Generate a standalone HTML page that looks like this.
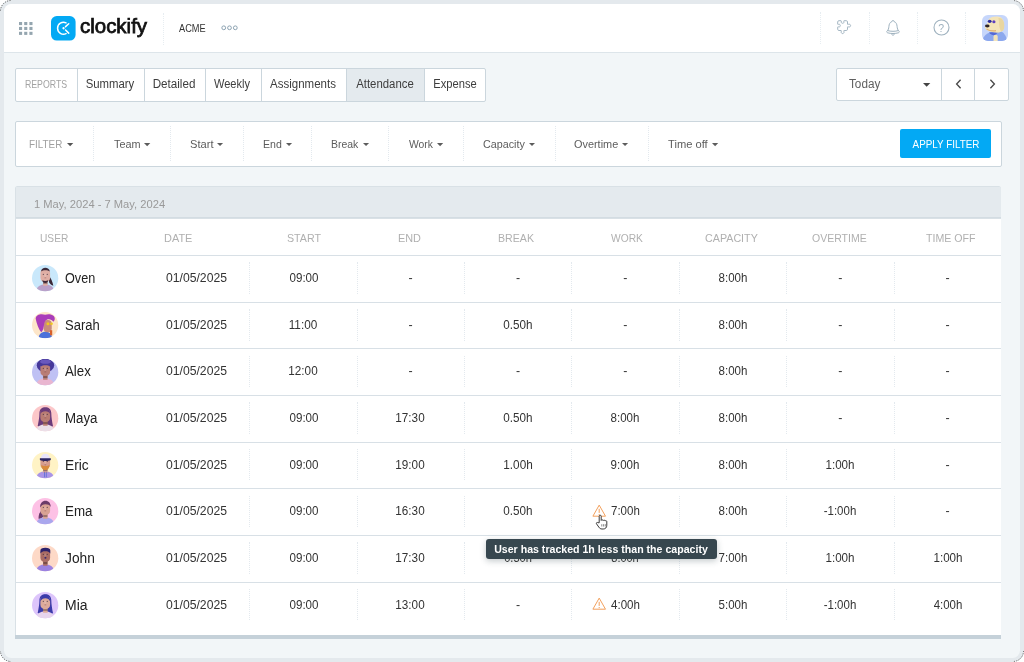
<!DOCTYPE html>
<html lang="en">
<head>
<meta charset="utf-8">
<title>Clockify - Attendance report</title>
<style>
html,body{margin:0;padding:0;}
body{width:1024px;height:662px;overflow:hidden;background:#fff;position:relative;font-family:"Liberation Sans",sans-serif;}
.frame{position:absolute;left:0;top:0;width:1024px;height:662px;border-radius:11px;background:#e4e9ed;}
.win{position:absolute;left:4px;top:4px;width:1016px;height:653.500px;border-radius:7.500px;background:#f2f6f8;overflow:hidden;will-change:transform;}
.t{position:absolute;white-space:nowrap;line-height:20px;height:20px;display:block;}
.abs{position:absolute;display:block;overflow:visible;}
.vd{position:absolute;width:0;border-left:1px dotted #e3e9ee;display:block;}
.vl{position:absolute;top:0;bottom:0;width:0;border-left:1px solid #cbd6dd;display:block;}
.hl{position:absolute;left:0;right:0;top:0;height:1px;background:#d8e0e6;display:block;}
.tab{position:absolute;top:0;bottom:0;box-sizing:border-box;}
.logo{-webkit-text-stroke:0.750px #111;}
</style>
</head>
<body>
<svg width="0" height="0" style="position:absolute"><defs><clipPath id="avc"><circle cx="13" cy="13" r="13"/></clipPath></defs></svg>
<div class="frame"></div>
<svg class="abs" style="left:0;top:0" width="1024" height="662" viewBox="0 0 1024 662"><rect x=".5" y=".5" width="1023" height="661" rx="10.500" fill="none" stroke="#555" stroke-width="1" stroke-dasharray="1 1.400" clip-path="url(#crn)"/>
<defs><clipPath id="crn"><path d="M0 0h11v11H0zM1013 0h11v11h-11zM0 651h11v11H0zM1013 651h11v11h-11z"/></clipPath></defs></svg>
<div class="win">
<div class="hdr" style="position:absolute;left:0.00px;top:0.00px;width:1016.00px;height:47.60px;background:#fff;border-bottom:1.400px solid #dde5ea;"><div style="position:absolute;left:-4px;top:-4px;"><svg class="abs" style="left:19px;top:21.8px" width="14" height="13.500" viewBox="0 0 14 13.500"><rect x="0.00" y="0.00" width="3.100" height="3.100" fill="#94a5af"/><rect x="5.20" y="0.00" width="3.100" height="3.100" fill="#94a5af"/><rect x="10.40" y="0.00" width="3.100" height="3.100" fill="#94a5af"/><rect x="0.00" y="4.90" width="3.100" height="3.100" fill="#94a5af"/><rect x="5.20" y="4.90" width="3.100" height="3.100" fill="#94a5af"/><rect x="10.40" y="4.90" width="3.100" height="3.100" fill="#94a5af"/><rect x="0.00" y="9.80" width="3.100" height="3.100" fill="#94a5af"/><rect x="5.20" y="9.80" width="3.100" height="3.100" fill="#94a5af"/><rect x="10.40" y="9.80" width="3.100" height="3.100" fill="#94a5af"/></svg><svg class="abs" style="left:51.2px;top:15.700px" width="24.600" height="24.600" viewBox="0 0 24.700 24.700"><rect width="24.700" height="24.700" rx="5.800" fill="#03a9f4"/><path d="M15.140 6.860A6 6 0 1 0 15.140 17.740" fill="none" stroke="#fff" stroke-width="1.500" stroke-linecap="round"/><path d="M14.600 10.700L17.800 7.800M14.600 14.100L17.800 17.200" stroke="#fff" stroke-width="1.500" stroke-linecap="round"/><circle cx="12.600" cy="12.300" r="1.150" fill="#fff"/></svg><span id="t1" class="t logo" style="top:16.00px;left:79.90px;font-size:20.0px;color:#111;transform:scaleX(1.0226);transform-origin:0 50%;">clockify</span><i class="vd" style="left:162.50px;top:12.70px;height:32.00px;border-left-color:#e7edf1"></i><span id="t2" class="t " style="top:19.00px;left:179.20px;font-size:10.3px;color:#333;transform:scaleX(0.8955);transform-origin:0 50%;">ACME</span><svg class="abs" style="left:220px;top:24px" width="20" height="8" viewBox="0 0 20 8"><g fill="none" stroke="#8da3b2" stroke-width="1"><circle cx="3.750" cy="3.800" r="1.900"/><circle cx="9.500" cy="3.800" r="1.900"/><circle cx="15.300" cy="3.800" r="1.900"/></g></svg><i class="vd" style="left:820.10px;top:12.20px;height:32.20px;border-left-color:#e7edf1"></i><i class="vd" style="left:868.50px;top:12.20px;height:32.20px;border-left-color:#e7edf1"></i><i class="vd" style="left:916.50px;top:12.20px;height:32.20px;border-left-color:#e7edf1"></i><i class="vd" style="left:965.30px;top:12.20px;height:32.20px;border-left-color:#e7edf1"></i><svg class="abs" style="left:836.7px;top:20.300px" width="15" height="15" viewBox="0 0 15 15"><path d="M1.900.7H4C4.600.7 4.500 1.300 4.300 1.700 4 2.600 4.700 3.300 5.600 3.300S7.200 2.600 6.900 1.700C6.700 1.300 6.600.7 7.200.7H9.300C10 .7 10.500 1.200 10.500 1.900V4C10.500 4.600 11 4.500 11.400 4.300 12.500 3.900 13.600 4.500 13.600 5.600S12.500 7.300 11.400 6.900C11 6.700 10.500 6.600 10.500 7.200V9.300C10.500 10 10 10.500 9.300 10.500H7.200C6.600 10.500 6.700 11 6.900 11.400 7.300 12.500 6.700 13.600 5.600 13.600S3.900 12.500 4.300 11.400C4.500 11 4.600 10.500 4 10.500H1.900C1.200 10.500.7 10 .7 9.300V7.200C.7 6.600 1.300 6.700 1.700 6.900 2.600 7.200 3.300 6.500 3.300 5.600S2.600 4 1.700 4.300C1.300 4.500.7 4.600.7 4V1.900C.7 1.200 1.200.7 1.900.7z" fill="none" stroke="#a3b5c2" stroke-width="1" stroke-linejoin="round"/></svg><svg class="abs" style="left:885.2px;top:19.300px" width="16" height="18" viewBox="0 0 16 18"><g fill="none" stroke="#9fb2bf" stroke-width="1"><path d="M8 1.500c-.7 0-1.100.5-1.100 1.100C4.800 3.300 4.100 5.200 3.900 7.500c-.2 2-.6 3.400-1.600 4.300-.9.700-.7 1.700.3 2 1.500.5 3.500.7 5.400.7s3.900-.2 5.400-.7c1-.3 1.200-1.300.3-2-1-.9-1.400-2.300-1.600-4.300-.2-2.300-.9-4.200-3-4.900C9.100 2 8.700 1.500 8 1.500z"/><path d="M2.600 11.500c1.500.6 3.400.8 5.400.8s3.900-.2 5.400-.8"/><path d="M6.600 14.700c.1.900.6 1.500 1.400 1.500s1.300-.6 1.400-1.500"/></g></svg><svg class="abs" style="left:932.5px;top:19.400px" width="17" height="17" viewBox="0 0 17 17"><circle cx="8.500" cy="8.500" r="7.500" fill="none" stroke="#9fb2bf" stroke-width="1.100"/></svg><span id="t3" class="t " style="top:18.00px;left:941.18px;font-size:10.5px;color:#9fb2bf;transform:translateX(-50%);transform-origin:50% 50%;">?</span><svg class="abs" style="left:982.1px;top:15.100px" width="26" height="26" viewBox="0 0 26 26"><defs><clipPath id="dgc"><rect width="26" height="26" rx="6"/></clipPath></defs><g clip-path="url(#dgc)"><rect width="26" height="26" fill="#c6d6fb"/><path d="M0 26c.5-3 2.500-5.500 5.500-7.500l5-2.500 9 .5c3 1.500 5 5 5.500 9.500z" fill="#8ca8ee"/><path d="M7 17.500c1.500 2.200 4 3 6.500 2.600l2.500-3.100z" fill="#5469d4"/><path d="M7.200 3.600C10 1.100 16 .9 19 2.500c3 2 3.600 7.500 2.600 11.500-1 3-4.500 4-8.500 3.600-4-.3-8-1.500-9.600-4-1-1.600-.4-3.600 1.600-4.100.5-2.500 1-4.400 2.100-5.900z" fill="#f4e4b8"/><path d="M4.500 14c2.500 1.700 6 2.300 9.500 1.700" stroke="#d9a566" stroke-width="1.300" fill="none" opacity=".8"/><path d="M16.400 3.100c3.600-.6 6.100 2.900 5.900 7.900-.1 3.500-1.300 5.500-3.300 5.300-1.500-2.300-2-6.300-2-9.300z" fill="#e9d6a0"/><ellipse cx="5.300" cy="11" rx="2.300" ry="1.450" fill="#2b2229"/><ellipse cx="7.700" cy="6.300" rx="1.900" ry="1.600" fill="#2c2c9e"/><ellipse cx="11.900" cy="6.800" rx="1.600" ry="1.500" fill="#5d3fc0"/><rect x="11.500" y="19.700" width="4.200" height="8" rx="1.900" fill="#f4e4b8"/></g></svg></div></div>
<div class="tabs" style="position:absolute;left:11.10px;top:63.80px;width:471.00px;height:34.00px;background:#fff;border:1px solid #cbd6dd;border-radius:2px;box-sizing:border-box;overflow:hidden;"><div class="tab" style="left:0.00px;width:60.80px;"><span id="t4" class="t " style="top:6.20px;left:29.95px;font-size:10.3px;color:#a3a3a3;transform:translateX(-50%) scaleX(0.8516);transform-origin:50% 50%;">REPORTS</span></div><div class="tab" style="left:60.80px;width:67.10px;border-left:1px solid #cbd6dd;"><span id="t5" class="t " style="top:5.20px;left:32.25px;font-size:12.0px;color:#3d3d3d;transform:translateX(-50%) scaleX(0.9468);transform-origin:50% 50%;">Summary</span></div><div class="tab" style="left:127.90px;width:60.80px;border-left:1px solid #cbd6dd;"><span id="t6" class="t " style="top:5.20px;left:29.38px;font-size:12.0px;color:#3d3d3d;transform:translateX(-50%) scaleX(0.9705);transform-origin:50% 50%;">Detailed</span></div><div class="tab" style="left:188.70px;width:55.90px;border-left:1px solid #cbd6dd;"><span id="t7" class="t " style="top:5.20px;left:26.62px;font-size:12.0px;color:#3d3d3d;transform:translateX(-50%) scaleX(0.9215);transform-origin:50% 50%;">Weekly</span></div><div class="tab" style="left:244.60px;width:85.70px;border-left:1px solid #cbd6dd;"><span id="t8" class="t " style="top:5.20px;left:41.62px;font-size:12.0px;color:#3d3d3d;transform:translateX(-50%) scaleX(0.9586);transform-origin:50% 50%;">Assignments</span></div><div class="tab" style="left:330.30px;width:77.70px;border-left:1px solid #cbd6dd;background:#e4eaee;"><span id="t9" class="t " style="top:5.20px;left:37.90px;font-size:12.0px;color:#3d3d3d;transform:translateX(-50%) scaleX(0.9487);transform-origin:50% 50%;">Attendance</span></div><div class="tab" style="left:408.00px;width:61.00px;border-left:1px solid #cbd6dd;"><span id="t10" class="t " style="top:5.20px;left:29.63px;font-size:12.0px;color:#3d3d3d;transform:translateX(-50%) scaleX(0.9295);transform-origin:50% 50%;">Expense</span></div></div>
<div class="datepick" style="position:absolute;left:831.80px;top:63.70px;width:173.30px;height:33.40px;background:#fff;border:1px solid #cbd6dd;border-radius:2px;box-sizing:border-box;"><span id="t11" class="t " style="top:5.30px;left:12.50px;font-size:12.0px;color:#606060;transform:scaleX(0.9776);transform-origin:0 50%;">Today</span><svg class="abs" style="left:85.80px;top:14.20px" width="7.30" height="3.80" viewBox="0 0 10 5"><path d="M0 0h10L5 5z" fill="#444"/></svg><i class="vl" style="left:104.30px"></i><i class="vl" style="left:137.10px"></i><svg class="abs" style="left:117.80px;top:9.50px" width="8" height="12" viewBox="0 0 8 12"><path d="M5.600 1.700L1.600 6l4 4.300" fill="none" stroke="#4a4a4a" stroke-width="1.350"/></svg><svg class="abs" style="left:151.00px;top:9.50px" width="8" height="12" viewBox="0 0 8 12"><path d="M2.400 1.700L6.400 6l-4 4.300" fill="none" stroke="#4a4a4a" stroke-width="1.350"/></svg></div>
<div class="filters" style="position:absolute;left:10.90px;top:116.80px;width:986.80px;height:46.00px;background:#fff;border:1px solid #cbd6dd;border-radius:2px;box-sizing:border-box;"><span id="t12" class="t " style="top:12.20px;left:13.10px;font-size:11.0px;color:#a0a0a0;transform:scaleX(0.8985);transform-origin:0 50%;">FILTER</span><svg class="abs" style="left:51.00px;top:20.86px" width="6.30" height="3.28" viewBox="0 0 10 5"><path d="M0 0h10L5 5z" fill="#555"/></svg><span id="t13" class="t " style="top:12.20px;left:98.00px;font-size:11.3px;color:#5c5c5c;transform:scaleX(0.9595);transform-origin:0 50%;">Team</span><svg class="abs" style="left:128.40px;top:20.86px" width="6.30" height="3.28" viewBox="0 0 10 5"><path d="M0 0h10L5 5z" fill="#5c5c5c"/></svg><span id="t14" class="t " style="top:12.20px;left:173.70px;font-size:11.3px;color:#5c5c5c;transform:scaleX(0.9854);transform-origin:0 50%;">Start</span><svg class="abs" style="left:201.60px;top:20.91px" width="6.10" height="3.17" viewBox="0 0 10 5"><path d="M0 0h10L5 5z" fill="#5c5c5c"/></svg><span id="t15" class="t " style="top:12.20px;left:246.70px;font-size:11.3px;color:#5c5c5c;transform:scaleX(0.9357);transform-origin:0 50%;">End</span><svg class="abs" style="left:269.70px;top:20.91px" width="6.10" height="3.17" viewBox="0 0 10 5"><path d="M0 0h10L5 5z" fill="#5c5c5c"/></svg><span id="t16" class="t " style="top:12.20px;left:315.60px;font-size:11.3px;color:#5c5c5c;transform:scaleX(0.9261);transform-origin:0 50%;">Break</span><svg class="abs" style="left:346.90px;top:20.91px" width="6.10" height="3.17" viewBox="0 0 10 5"><path d="M0 0h10L5 5z" fill="#5c5c5c"/></svg><span id="t17" class="t " style="top:12.20px;left:393.10px;font-size:11.3px;color:#5c5c5c;transform:scaleX(0.9154);transform-origin:0 50%;">Work</span><svg class="abs" style="left:421.30px;top:20.89px" width="6.20" height="3.22" viewBox="0 0 10 5"><path d="M0 0h10L5 5z" fill="#5c5c5c"/></svg><span id="t18" class="t " style="top:12.20px;left:467.60px;font-size:11.3px;color:#5c5c5c;transform:scaleX(0.9530);transform-origin:0 50%;">Capacity</span><svg class="abs" style="left:513.00px;top:20.94px" width="6.00" height="3.12" viewBox="0 0 10 5"><path d="M0 0h10L5 5z" fill="#5c5c5c"/></svg><span id="t19" class="t " style="top:12.20px;left:558.50px;font-size:11.3px;color:#5c5c5c;transform:scaleX(0.9644);transform-origin:0 50%;">Overtime</span><svg class="abs" style="left:606.30px;top:20.91px" width="6.10" height="3.17" viewBox="0 0 10 5"><path d="M0 0h10L5 5z" fill="#5c5c5c"/></svg><span id="t20" class="t " style="top:12.20px;left:652.30px;font-size:11.3px;color:#5c5c5c;transform:scaleX(0.9876);transform-origin:0 50%;">Time off</span><svg class="abs" style="left:696.30px;top:20.89px" width="6.20" height="3.22" viewBox="0 0 10 5"><path d="M0 0h10L5 5z" fill="#5c5c5c"/></svg><i class="vd" style="left:77.10px;top:4.70px;height:34.90px;border-left-color:#e3e9ee"></i><i class="vd" style="left:154.00px;top:4.70px;height:34.90px;border-left-color:#e3e9ee"></i><i class="vd" style="left:227.20px;top:4.70px;height:34.90px;border-left-color:#e3e9ee"></i><i class="vd" style="left:295.10px;top:4.70px;height:34.90px;border-left-color:#e3e9ee"></i><i class="vd" style="left:372.00px;top:4.70px;height:34.90px;border-left-color:#e3e9ee"></i><i class="vd" style="left:447.00px;top:4.70px;height:34.90px;border-left-color:#e3e9ee"></i><i class="vd" style="left:538.80px;top:4.70px;height:34.90px;border-left-color:#e3e9ee"></i><i class="vd" style="left:632.00px;top:4.70px;height:34.90px;border-left-color:#e3e9ee"></i><div class="btn" style="position:absolute;left:883.90px;top:7.70px;width:91.30px;height:28.70px;background:#03a9f4;border-radius:2px;"><span id="t21" class="t " style="top:4.50px;left:46.40px;font-size:10.9px;color:#fff;transform:translateX(-50%) scaleX(0.9049);transform-origin:50% 50%;">APPLY FILTER</span></div></div>
<div class="table" style="position:absolute;left:11.20px;top:181.90px;width:986.00px;height:452.70px;background:#d9e1e6;border-radius:2.500px 2.500px 0 0;overflow:hidden;"><div style="position:absolute;left:0.600px;top:0.900px;right:0.600px;bottom:0;"><div class="tbar" style="position:absolute;left:0.00px;top:0.00px;width:984.80px;height:30.50px;background:#e4eaee;border-bottom:1.300px solid #d3dce2;"><span id="t22" class="t " style="top:7.20px;left:17.90px;font-size:11.3px;color:#999;transform:scaleX(0.9878);transform-origin:0 50%;">1 May, 2024 - 7 May, 2024</span></div><div class="thead" style="position:absolute;left:0.00px;top:31.80px;width:984.80px;height:37.00px;background:#fff;"><span id="t23" class="t " style="top:9.40px;left:24.45px;font-size:11.6px;color:#b0b0b0;transform:scaleX(0.8777);transform-origin:0 50%;">USER</span><span id="t24" class="t " style="top:9.40px;left:148.35px;font-size:11.6px;color:#b0b0b0;transform:scaleX(0.9432);transform-origin:0 50%;">DATE</span><span id="t25" class="t " style="top:9.40px;left:271.00px;font-size:11.6px;color:#b0b0b0;transform:scaleX(0.9205);transform-origin:0 50%;">START</span><span id="t26" class="t " style="top:9.40px;left:381.75px;font-size:11.6px;color:#b0b0b0;transform:scaleX(0.9382);transform-origin:0 50%;">END</span><span id="t27" class="t " style="top:9.40px;left:482.35px;font-size:11.6px;color:#b0b0b0;transform:scaleX(0.9151);transform-origin:0 50%;">BREAK</span><span id="t28" class="t " style="top:9.40px;left:595.60px;font-size:11.6px;color:#b0b0b0;transform:scaleX(0.8837);transform-origin:0 50%;">WORK</span><span id="t29" class="t " style="top:9.40px;left:689.00px;font-size:11.6px;color:#b0b0b0;transform:scaleX(0.9240);transform-origin:0 50%;">CAPACITY</span><span id="t30" class="t " style="top:9.40px;left:796.50px;font-size:11.6px;color:#b0b0b0;transform:scaleX(0.9055);transform-origin:0 50%;">OVERTIME</span><span id="t31" class="t " style="top:9.40px;left:910.20px;font-size:11.6px;color:#b0b0b0;transform:scaleX(0.9148);transform-origin:0 50%;">TIME OFF</span></div><div class="row" style="position:absolute;left:0.00px;top:68.30px;width:984.80px;height:46.65px;background:#fff;"><i class="hl"></i><svg class="abs av" style="left:16.25px;top:10.15px" width="26.30" height="26.30" viewBox="0 0 26 26"><circle cx="13" cy="13" r="13" fill="#c9e8fb"/><g clip-path="url(#avc)"><path d="M16.500 11c2.500 1.500 3.600 5 4.600 9.500-1.800-.4-3.300-1.800-4.200-3.500z" fill="#3b2838"/><ellipse cx="13" cy="25.2" rx="8.6" ry="6.2" fill="#b9a1c9"/><rect x="11" y="14" width="4.4" height="6.500" fill="#dfaea4"/><rect x="11" y="16.200" width="4.4" height="2.600" fill="#000" opacity=".28"/><rect x="8.300" y="3.800" width="9.600" height="13" rx="4.200" fill="#dfaea4"/><rect x="12.300" y="8.500" width="1.700" height="3.600" rx=".8" fill="#fff" opacity=".16"/><circle cx="11.200" cy="9.300" r=".55" fill="#3a2b3a" opacity=".75"/><circle cx="15.100" cy="9.300" r=".55" fill="#3a2b3a" opacity=".75"/><rect x="12.300" y="12.300" width="1.800" height=".9" rx=".4" fill="#7a3b3b" opacity=".55"/><path d="M9 6.500C9.200 4 11 2.800 13.200 2.800S17.300 4 17.600 6.500c-1-.9-2.500-1.400-4.400-1.400S10 5.600 9 6.500z" fill="#3b2838"/><path d="M10.200 15.200c1.800.9 4 .9 5.800 0 0 1.600-1.200 2.600-2.900 2.600s-2.900-1-2.900-2.600z" fill="#3b2838"/></g></svg><span id="t32" class="t " style="top:13.90px;left:49.40px;font-size:13.8px;color:#222;transform:scaleX(0.9168);transform-origin:0 50%;">Oven</span><span id="t33" class="t " style="top:12.90px;left:150.10px;font-size:12.4px;color:#333;transform:scaleX(0.9831);transform-origin:0 50%;">01/05/2025</span><i class="vd" style="left:233.50px;top:7.20px;height:31.60px;border-left-color:#e3e9ee"></i><span id="t34" class="t " style="top:12.90px;left:287.80px;font-size:12.4px;color:#333;transform:translateX(-50%) scaleX(0.9365);transform-origin:50% 50%;">09:00</span><i class="vd" style="left:340.90px;top:7.20px;height:31.60px;border-left-color:#e3e9ee"></i><span id="t35" class="t " style="top:12.90px;left:394.75px;font-size:12.4px;color:#333;transform:translateX(-50%);transform-origin:50% 50%;">-</span><i class="vd" style="left:448.30px;top:7.20px;height:31.60px;border-left-color:#e3e9ee"></i><span id="t36" class="t " style="top:12.90px;left:502.20px;font-size:12.4px;color:#333;transform:translateX(-50%);transform-origin:50% 50%;">-</span><i class="vd" style="left:555.70px;top:7.20px;height:31.60px;border-left-color:#e3e9ee"></i><span id="t37" class="t " style="top:12.90px;left:609.65px;font-size:12.4px;color:#333;transform:translateX(-50%);transform-origin:50% 50%;">-</span><i class="vd" style="left:663.10px;top:7.20px;height:31.60px;border-left-color:#e3e9ee"></i><span id="t38" class="t " style="top:12.90px;left:716.85px;font-size:12.4px;color:#333;transform:translateX(-50%) scaleX(0.9309);transform-origin:50% 50%;">8:00h</span><i class="vd" style="left:770.50px;top:7.20px;height:31.60px;border-left-color:#e3e9ee"></i><span id="t39" class="t " style="top:12.90px;left:824.43px;font-size:12.4px;color:#333;transform:translateX(-50%);transform-origin:50% 50%;">-</span><i class="vd" style="left:877.90px;top:7.20px;height:31.60px;border-left-color:#e3e9ee"></i><span id="t40" class="t " style="top:12.90px;left:931.75px;font-size:12.4px;color:#333;transform:translateX(-50%);transform-origin:50% 50%;">-</span></div><div class="row" style="position:absolute;left:0.00px;top:114.95px;width:984.80px;height:46.65px;background:#fff;"><i class="hl"></i><svg class="abs av" style="left:16.25px;top:10.15px" width="26.30" height="26.30" viewBox="0 0 26 26"><circle cx="13" cy="13" r="13" fill="#fde6c9"/><g clip-path="url(#avc)"><path d="M6.5 26c0-4 3-6.5 7-6.5s6 2.500 6.500 6.500z" fill="#4d72da"/><rect x="11.5" y="8" width="8" height="12" rx="3.6" fill="#c98c7c"/><path d="M3.600 6.500C4 2.500 9 1.500 13 2.800c3-1 6.500-.5 8.500 1.200 1.600 1.600 1.300 4.500-.4 5.600-1.200-2-3.500-2.800-6-2.300-2 .8-3 2.800-3.200 5.200-.3 2.800-.9 5.600-2.700 7.600C6.500 17 4.500 11 3.600 6.500z" fill="#a93cba"/><circle cx="15.800" cy="11.600" r="1.500" fill="#f2c81e"/><circle cx="19.300" cy="11.600" r="1.300" fill="#f2c81e"/><rect x="17.800" y="18" width="2.200" height="5" fill="#d8602a"/></g></svg><span id="t41" class="t " style="top:14.25px;left:49.40px;font-size:13.8px;color:#222;transform:scaleX(0.9424);transform-origin:0 50%;">Sarah</span><span id="t42" class="t " style="top:13.25px;left:150.10px;font-size:12.4px;color:#333;transform:scaleX(0.9831);transform-origin:0 50%;">01/05/2025</span><i class="vd" style="left:233.50px;top:7.20px;height:31.60px;border-left-color:#e3e9ee"></i><span id="t43" class="t " style="top:13.25px;left:287.42px;font-size:12.4px;color:#333;transform:translateX(-50%) scaleX(0.9515);transform-origin:50% 50%;">11:00</span><i class="vd" style="left:340.90px;top:7.20px;height:31.60px;border-left-color:#e3e9ee"></i><span id="t44" class="t " style="top:13.25px;left:394.75px;font-size:12.4px;color:#333;transform:translateX(-50%);transform-origin:50% 50%;">-</span><i class="vd" style="left:448.30px;top:7.20px;height:31.60px;border-left-color:#e3e9ee"></i><span id="t45" class="t " style="top:13.25px;left:502.45px;font-size:12.4px;color:#333;transform:translateX(-50%) scaleX(0.9436);transform-origin:50% 50%;">0.50h</span><i class="vd" style="left:555.70px;top:7.20px;height:31.60px;border-left-color:#e3e9ee"></i><span id="t46" class="t " style="top:13.25px;left:609.65px;font-size:12.4px;color:#333;transform:translateX(-50%);transform-origin:50% 50%;">-</span><i class="vd" style="left:663.10px;top:7.20px;height:31.60px;border-left-color:#e3e9ee"></i><span id="t47" class="t " style="top:13.25px;left:716.85px;font-size:12.4px;color:#333;transform:translateX(-50%) scaleX(0.9309);transform-origin:50% 50%;">8:00h</span><i class="vd" style="left:770.50px;top:7.20px;height:31.60px;border-left-color:#e3e9ee"></i><span id="t48" class="t " style="top:13.25px;left:824.43px;font-size:12.4px;color:#333;transform:translateX(-50%);transform-origin:50% 50%;">-</span><i class="vd" style="left:877.90px;top:7.20px;height:31.60px;border-left-color:#e3e9ee"></i><span id="t49" class="t " style="top:13.25px;left:931.75px;font-size:12.4px;color:#333;transform:translateX(-50%);transform-origin:50% 50%;">-</span></div><div class="row" style="position:absolute;left:0.00px;top:161.60px;width:984.80px;height:46.65px;background:#fff;"><i class="hl"></i><svg class="abs av" style="left:16.25px;top:10.15px" width="26.30" height="26.30" viewBox="0 0 26 26"><circle cx="13" cy="13" r="13" fill="#bfc1f4"/><g clip-path="url(#avc)"><ellipse cx="13" cy="25.2" rx="8.6" ry="6.2" fill="#e9b6d0"/><rect x="11" y="14" width="4.4" height="6.500" fill="#b97d76"/><rect x="11" y="16.200" width="4.4" height="2.600" fill="#000" opacity=".28"/><ellipse cx="13.300" cy="6.300" rx="8.600" ry="6.800" fill="#46389a"/><rect x="8.300" y="3.800" width="9.600" height="13" rx="4.200" fill="#b97d76"/><rect x="12.300" y="8.500" width="1.700" height="3.600" rx=".8" fill="#fff" opacity=".16"/><circle cx="11.200" cy="9.300" r=".55" fill="#3a2b3a" opacity=".75"/><circle cx="15.100" cy="9.300" r=".55" fill="#3a2b3a" opacity=".75"/><rect x="12.300" y="12.300" width="1.800" height=".9" rx=".4" fill="#7a3b3b" opacity=".55"/><path d="M5.500 8.500C4.600 3 9 -.2 13.300 -.2S22 3 21.100 8.500C20 7.200 18.600 6.600 17.700 7.300 16 5.700 10.600 5.700 8.900 7.300 8 6.600 6.600 7.200 5.500 8.500z" fill="#46389a"/><ellipse cx="13.300" cy="2.600" rx="5.200" ry="2" fill="#6a58bd"/></g></svg><span id="t50" class="t " style="top:13.60px;left:49.40px;font-size:13.8px;color:#222;transform:scaleX(0.9596);transform-origin:0 50%;">Alex</span><span id="t51" class="t " style="top:12.60px;left:150.10px;font-size:12.4px;color:#333;transform:scaleX(0.9831);transform-origin:0 50%;">01/05/2025</span><i class="vd" style="left:233.50px;top:7.20px;height:31.60px;border-left-color:#e3e9ee"></i><span id="t52" class="t " style="top:12.60px;left:287.42px;font-size:12.4px;color:#333;transform:translateX(-50%) scaleX(0.9457);transform-origin:50% 50%;">12:00</span><i class="vd" style="left:340.90px;top:7.20px;height:31.60px;border-left-color:#e3e9ee"></i><span id="t53" class="t " style="top:12.60px;left:394.75px;font-size:12.4px;color:#333;transform:translateX(-50%);transform-origin:50% 50%;">-</span><i class="vd" style="left:448.30px;top:7.20px;height:31.60px;border-left-color:#e3e9ee"></i><span id="t54" class="t " style="top:12.60px;left:502.20px;font-size:12.4px;color:#333;transform:translateX(-50%);transform-origin:50% 50%;">-</span><i class="vd" style="left:555.70px;top:7.20px;height:31.60px;border-left-color:#e3e9ee"></i><span id="t55" class="t " style="top:12.60px;left:609.65px;font-size:12.4px;color:#333;transform:translateX(-50%);transform-origin:50% 50%;">-</span><i class="vd" style="left:663.10px;top:7.20px;height:31.60px;border-left-color:#e3e9ee"></i><span id="t56" class="t " style="top:12.60px;left:716.85px;font-size:12.4px;color:#333;transform:translateX(-50%) scaleX(0.9309);transform-origin:50% 50%;">8:00h</span><i class="vd" style="left:770.50px;top:7.20px;height:31.60px;border-left-color:#e3e9ee"></i><span id="t57" class="t " style="top:12.60px;left:824.43px;font-size:12.4px;color:#333;transform:translateX(-50%);transform-origin:50% 50%;">-</span><i class="vd" style="left:877.90px;top:7.20px;height:31.60px;border-left-color:#e3e9ee"></i><span id="t58" class="t " style="top:12.60px;left:931.75px;font-size:12.4px;color:#333;transform:translateX(-50%);transform-origin:50% 50%;">-</span></div><div class="row" style="position:absolute;left:0.00px;top:208.25px;width:984.80px;height:46.65px;background:#fff;"><i class="hl"></i><svg class="abs av" style="left:16.25px;top:10.15px" width="26.30" height="26.30" viewBox="0 0 26 26"><circle cx="13" cy="13" r="13" fill="#fcc7c9"/><g clip-path="url(#avc)"><path d="M7.300 8.500C7.300 4 10 2.200 13.200 2.200s5.900 1.800 5.900 6.300c0 3 .8 8.500 1.700 12.500-2 .8-4 .5-4.800-1l-5.800.2c-1 1.300-3 1.500-4.600.6C6.500 17 7.300 12 7.300 8.500z" fill="#6b3b7a"/><ellipse cx="13" cy="25.2" rx="8.6" ry="6.2" fill="#ebdfe8"/><rect x="11" y="14" width="4.4" height="6.500" fill="#b97c73"/><rect x="11" y="16.200" width="4.4" height="2.600" fill="#000" opacity=".28"/><rect x="8.300" y="3.800" width="9.600" height="13" rx="4.200" fill="#b97c73"/><rect x="12.300" y="8.500" width="1.700" height="3.600" rx=".8" fill="#fff" opacity=".16"/><circle cx="11.200" cy="9.300" r=".55" fill="#3a2b3a" opacity=".75"/><circle cx="15.100" cy="9.300" r=".55" fill="#3a2b3a" opacity=".75"/><rect x="12.300" y="12.300" width="1.800" height=".9" rx=".4" fill="#7a3b3b" opacity=".55"/><path d="M8.300 9C8.300 5 10.300 3 13.200 3s4.700 2 4.700 6c-.8-2-2.300-2.900-4.700-2.900S9.200 7 8.300 9z" fill="#6b3b7a"/></g></svg><span id="t59" class="t " style="top:13.95px;left:49.44px;font-size:13.8px;color:#222;transform:scaleX(0.9635);transform-origin:0 50%;">Maya</span><span id="t60" class="t " style="top:12.95px;left:150.10px;font-size:12.4px;color:#333;transform:scaleX(0.9831);transform-origin:0 50%;">01/05/2025</span><i class="vd" style="left:233.50px;top:7.20px;height:31.60px;border-left-color:#e3e9ee"></i><span id="t61" class="t " style="top:12.95px;left:287.80px;font-size:12.4px;color:#333;transform:translateX(-50%) scaleX(0.9365);transform-origin:50% 50%;">09:00</span><i class="vd" style="left:340.90px;top:7.20px;height:31.60px;border-left-color:#e3e9ee"></i><span id="t62" class="t " style="top:12.95px;left:394.63px;font-size:12.4px;color:#333;transform:translateX(-50%) scaleX(0.9457);transform-origin:50% 50%;">17:30</span><i class="vd" style="left:448.30px;top:7.20px;height:31.60px;border-left-color:#e3e9ee"></i><span id="t63" class="t " style="top:12.95px;left:502.45px;font-size:12.4px;color:#333;transform:translateX(-50%) scaleX(0.9436);transform-origin:50% 50%;">0.50h</span><i class="vd" style="left:555.70px;top:7.20px;height:31.60px;border-left-color:#e3e9ee"></i><span id="t64" class="t " style="top:12.95px;left:609.65px;font-size:12.4px;color:#333;transform:translateX(-50%) scaleX(0.9309);transform-origin:50% 50%;">8:00h</span><i class="vd" style="left:663.10px;top:7.20px;height:31.60px;border-left-color:#e3e9ee"></i><span id="t65" class="t " style="top:12.95px;left:716.85px;font-size:12.4px;color:#333;transform:translateX(-50%) scaleX(0.9309);transform-origin:50% 50%;">8:00h</span><i class="vd" style="left:770.50px;top:7.20px;height:31.60px;border-left-color:#e3e9ee"></i><span id="t66" class="t " style="top:12.95px;left:824.43px;font-size:12.4px;color:#333;transform:translateX(-50%);transform-origin:50% 50%;">-</span><i class="vd" style="left:877.90px;top:7.20px;height:31.60px;border-left-color:#e3e9ee"></i><span id="t67" class="t " style="top:12.95px;left:931.75px;font-size:12.4px;color:#333;transform:translateX(-50%);transform-origin:50% 50%;">-</span></div><div class="row" style="position:absolute;left:0.00px;top:254.90px;width:984.80px;height:46.65px;background:#fff;"><i class="hl"></i><svg class="abs av" style="left:16.25px;top:10.15px" width="26.30" height="26.30" viewBox="0 0 26 26"><circle cx="13" cy="13" r="13" fill="#fff3c5"/><g clip-path="url(#avc)"><ellipse cx="13" cy="25.2" rx="8.6" ry="6.2" fill="#a994e7"/><rect x="11" y="14" width="4.4" height="6.500" fill="#d69c8d"/><rect x="11" y="16.200" width="4.4" height="2.600" fill="#000" opacity=".28"/><rect x="8.300" y="3.800" width="9.600" height="13" rx="4.200" fill="#d69c8d"/><rect x="12.300" y="8.500" width="1.700" height="3.600" rx=".8" fill="#fff" opacity=".16"/><circle cx="11.200" cy="9.300" r=".55" fill="#3a2b3a" opacity=".75"/><circle cx="15.100" cy="9.300" r=".55" fill="#3a2b3a" opacity=".75"/><rect x="12.300" y="12.300" width="1.800" height=".9" rx=".4" fill="#7a3b3b" opacity=".55"/><path d="M9.300 12.500c1 1 2.400 1.400 3.900 1.400s2.900-.4 3.900-1.400c.3 3.200-1.300 5.300-3.900 5.300s-4.200-2.100-3.900-5.300z" fill="#d98b3c"/><path d="M8.600 6.800C8.800 3.600 10.600 1.800 13.200 1.800s4.400 1.800 4.600 5z" fill="#e9e4fb"/><path d="M7.800 6.300h10.800v1.500c-1.500.7-3.400 1-5.400 1s-3.900-.3-5.400-1z" fill="#2b2662"/><rect x="12" y="19.500" width=".8" height="5.500" fill="#5d6fd0"/><rect x="13.700" y="19.500" width=".8" height="5.500" fill="#5d6fd0"/></g></svg><span id="t68" class="t " style="top:14.30px;left:49.41px;font-size:13.8px;color:#222;transform:scaleX(0.9933);transform-origin:0 50%;">Eric</span><span id="t69" class="t " style="top:13.30px;left:150.10px;font-size:12.4px;color:#333;transform:scaleX(0.9831);transform-origin:0 50%;">01/05/2025</span><i class="vd" style="left:233.50px;top:7.20px;height:31.60px;border-left-color:#e3e9ee"></i><span id="t70" class="t " style="top:13.30px;left:287.80px;font-size:12.4px;color:#333;transform:translateX(-50%) scaleX(0.9365);transform-origin:50% 50%;">09:00</span><i class="vd" style="left:340.90px;top:7.20px;height:31.60px;border-left-color:#e3e9ee"></i><span id="t71" class="t " style="top:13.30px;left:394.63px;font-size:12.4px;color:#333;transform:translateX(-50%) scaleX(0.9457);transform-origin:50% 50%;">19:00</span><i class="vd" style="left:448.30px;top:7.20px;height:31.60px;border-left-color:#e3e9ee"></i><span id="t72" class="t " style="top:13.30px;left:502.08px;font-size:12.4px;color:#333;transform:translateX(-50%) scaleX(0.9501);transform-origin:50% 50%;">1.00h</span><i class="vd" style="left:555.70px;top:7.20px;height:31.60px;border-left-color:#e3e9ee"></i><span id="t73" class="t " style="top:13.30px;left:609.65px;font-size:12.4px;color:#333;transform:translateX(-50%) scaleX(0.9309);transform-origin:50% 50%;">9:00h</span><i class="vd" style="left:663.10px;top:7.20px;height:31.60px;border-left-color:#e3e9ee"></i><span id="t74" class="t " style="top:13.30px;left:716.85px;font-size:12.4px;color:#333;transform:translateX(-50%) scaleX(0.9309);transform-origin:50% 50%;">8:00h</span><i class="vd" style="left:770.50px;top:7.20px;height:31.60px;border-left-color:#e3e9ee"></i><span id="t75" class="t " style="top:13.30px;left:824.55px;font-size:12.4px;color:#333;transform:translateX(-50%) scaleX(0.9387);transform-origin:50% 50%;">1:00h</span><i class="vd" style="left:877.90px;top:7.20px;height:31.60px;border-left-color:#e3e9ee"></i><span id="t76" class="t " style="top:13.30px;left:931.75px;font-size:12.4px;color:#333;transform:translateX(-50%);transform-origin:50% 50%;">-</span></div><div class="row" style="position:absolute;left:0.00px;top:301.55px;width:984.80px;height:46.65px;background:#fff;"><i class="hl"></i><svg class="abs av" style="left:16.25px;top:10.15px" width="26.30" height="26.30" viewBox="0 0 26 26"><circle cx="13" cy="13" r="13" fill="#fdc1e5"/><g clip-path="url(#avc)"><path d="M9.500 12c-2 2-3.200 5-3 8.500 1.500.5 3.500-.5 4.500-2z" fill="#6b3b69"/><ellipse cx="13" cy="25.2" rx="8.6" ry="6.2" fill="#aaa7ed"/><rect x="11" y="14" width="4.4" height="6.500" fill="#d9a293"/><rect x="11" y="16.200" width="4.4" height="2.600" fill="#000" opacity=".28"/><rect x="8.300" y="3.800" width="9.600" height="13" rx="4.200" fill="#d9a293"/><rect x="12.300" y="8.500" width="1.700" height="3.600" rx=".8" fill="#fff" opacity=".16"/><circle cx="11.200" cy="9.300" r=".55" fill="#3a2b3a" opacity=".75"/><circle cx="15.100" cy="9.300" r=".55" fill="#3a2b3a" opacity=".75"/><rect x="12.300" y="12.300" width="1.800" height=".9" rx=".4" fill="#7a3b3b" opacity=".55"/><path d="M8 9.500C8 5 10.300 2.800 13.300 2.800s5.200 2.200 5.200 6c-1.200-1.800-2.800-2.500-5.200-2.500S9.200 7.500 8 9.500z" fill="#6b3b69"/></g></svg><span id="t77" class="t " style="top:13.65px;left:49.43px;font-size:13.8px;color:#222;transform:scaleX(0.9679);transform-origin:0 50%;">Ema</span><span id="t78" class="t " style="top:12.65px;left:150.10px;font-size:12.4px;color:#333;transform:scaleX(0.9831);transform-origin:0 50%;">01/05/2025</span><i class="vd" style="left:233.50px;top:7.20px;height:31.60px;border-left-color:#e3e9ee"></i><span id="t79" class="t " style="top:12.65px;left:287.80px;font-size:12.4px;color:#333;transform:translateX(-50%) scaleX(0.9365);transform-origin:50% 50%;">09:00</span><i class="vd" style="left:340.90px;top:7.20px;height:31.60px;border-left-color:#e3e9ee"></i><span id="t80" class="t " style="top:12.65px;left:394.63px;font-size:12.4px;color:#333;transform:translateX(-50%) scaleX(0.9457);transform-origin:50% 50%;">16:30</span><i class="vd" style="left:448.30px;top:7.20px;height:31.60px;border-left-color:#e3e9ee"></i><span id="t81" class="t " style="top:12.65px;left:502.45px;font-size:12.4px;color:#333;transform:translateX(-50%) scaleX(0.9436);transform-origin:50% 50%;">0.50h</span><i class="vd" style="left:555.70px;top:7.20px;height:31.60px;border-left-color:#e3e9ee"></i><svg class="abs" style="left:576.70px;top:15.20px" width="14.400" height="13" viewBox="0 0 14.400 13"><path d="M7.200 1.100L13.500 12.200H.9z" fill="none" stroke="#f2a05c" stroke-width="1" stroke-linejoin="round"/><path d="M7.200 4.800v4.100M7.200 10v1.100" stroke="#f2a05c" stroke-width="1"/></svg><span id="t82" class="t " style="top:12.65px;left:595.10px;font-size:12.4px;color:#333;transform:scaleX(0.9292);transform-origin:0 50%;">7:00h</span><i class="vd" style="left:663.10px;top:7.20px;height:31.60px;border-left-color:#e3e9ee"></i><span id="t83" class="t " style="top:12.65px;left:716.85px;font-size:12.4px;color:#333;transform:translateX(-50%) scaleX(0.9309);transform-origin:50% 50%;">8:00h</span><i class="vd" style="left:770.50px;top:7.20px;height:31.60px;border-left-color:#e3e9ee"></i><span id="t84" class="t " style="top:12.65px;left:824.05px;font-size:12.4px;color:#333;transform:translateX(-50%) scaleX(0.9263);transform-origin:50% 50%;">-1:00h</span><i class="vd" style="left:877.90px;top:7.20px;height:31.60px;border-left-color:#e3e9ee"></i><span id="t85" class="t " style="top:12.65px;left:931.75px;font-size:12.4px;color:#333;transform:translateX(-50%);transform-origin:50% 50%;">-</span></div><div class="row" style="position:absolute;left:0.00px;top:348.20px;width:984.80px;height:46.65px;background:#fff;"><i class="hl"></i><svg class="abs av" style="left:16.25px;top:10.15px" width="26.30" height="26.30" viewBox="0 0 26 26"><circle cx="13" cy="13" r="13" fill="#fdd9c7"/><g clip-path="url(#avc)"><ellipse cx="13" cy="25.2" rx="8.6" ry="6.2" fill="#9b82e1"/><rect x="11" y="14" width="4.4" height="6.500" fill="#a96c64"/><rect x="11" y="16.200" width="4.4" height="2.600" fill="#000" opacity=".28"/><rect x="8.300" y="3.800" width="9.600" height="13" rx="4.200" fill="#a96c64"/><rect x="12.300" y="8.500" width="1.700" height="3.600" rx=".8" fill="#fff" opacity=".16"/><circle cx="11.200" cy="9.300" r=".55" fill="#3a2b3a" opacity=".75"/><circle cx="15.100" cy="9.300" r=".55" fill="#3a2b3a" opacity=".75"/><rect x="12.300" y="12.300" width="1.800" height=".9" rx=".4" fill="#7a3b3b" opacity=".55"/><path d="M8.300 8.500V5.500C8.300 3.600 10 2.800 13.200 2.800s4.900.8 4.900 2.700v3c-1-1.600-2.600-2.200-4.900-2.200S9.300 6.900 8.300 8.500z" fill="#2b216a"/><rect x="12.400" y="11.600" width="1.800" height="2" rx=".8" fill="#3b2a70"/></g></svg><span id="t86" class="t " style="top:14.00px;left:48.90px;font-size:13.8px;color:#222;transform:scaleX(0.9972);transform-origin:0 50%;">John</span><span id="t87" class="t " style="top:13.00px;left:150.10px;font-size:12.4px;color:#333;transform:scaleX(0.9831);transform-origin:0 50%;">01/05/2025</span><i class="vd" style="left:233.50px;top:7.20px;height:31.60px;border-left-color:#e3e9ee"></i><span id="t88" class="t " style="top:13.00px;left:287.80px;font-size:12.4px;color:#333;transform:translateX(-50%) scaleX(0.9365);transform-origin:50% 50%;">09:00</span><i class="vd" style="left:340.90px;top:7.20px;height:31.60px;border-left-color:#e3e9ee"></i><span id="t89" class="t " style="top:13.00px;left:394.63px;font-size:12.4px;color:#333;transform:translateX(-50%) scaleX(0.9457);transform-origin:50% 50%;">17:30</span><i class="vd" style="left:448.30px;top:7.20px;height:31.60px;border-left-color:#e3e9ee"></i><span id="t90" class="t " style="top:13.00px;left:502.20px;font-size:12.4px;color:#333;transform:translateX(-50%) scaleX(0.8934);transform-origin:50% 50%;">0.50h</span><i class="vd" style="left:555.70px;top:7.20px;height:31.60px;border-left-color:#e3e9ee"></i><span id="t91" class="t " style="top:13.00px;left:609.60px;font-size:12.4px;color:#333;transform:translateX(-50%) scaleX(0.8838);transform-origin:50% 50%;">8:00h</span><i class="vd" style="left:663.10px;top:7.20px;height:31.60px;border-left-color:#e3e9ee"></i><span id="t92" class="t " style="top:13.00px;left:716.73px;font-size:12.4px;color:#333;transform:translateX(-50%) scaleX(0.9297);transform-origin:50% 50%;">7:00h</span><i class="vd" style="left:770.50px;top:7.20px;height:31.60px;border-left-color:#e3e9ee"></i><span id="t93" class="t " style="top:13.00px;left:824.55px;font-size:12.4px;color:#333;transform:translateX(-50%) scaleX(0.9387);transform-origin:50% 50%;">1:00h</span><i class="vd" style="left:877.90px;top:7.20px;height:31.60px;border-left-color:#e3e9ee"></i><span id="t94" class="t " style="top:13.00px;left:931.75px;font-size:12.4px;color:#333;transform:translateX(-50%) scaleX(0.9387);transform-origin:50% 50%;">1:00h</span></div><div class="row" style="position:absolute;left:0.00px;top:394.85px;width:984.80px;height:52.95px;background:#fff;"><i class="hl"></i><svg class="abs av" style="left:16.25px;top:10.15px" width="26.30" height="26.30" viewBox="0 0 26 26"><circle cx="13" cy="13" r="13" fill="#ddc5fb"/><g clip-path="url(#avc)"><path d="M7.300 8.500C7.300 4 10 2.200 13.200 2.200s5.900 1.800 5.900 6.300c0 3 .8 8.500 1.700 12.500-2 .8-4 .5-4.800-1l-5.800.2c-1 1.300-3 1.500-4.600.6C6.500 17 7.300 12 7.300 8.500z" fill="#3b3baa"/><ellipse cx="13" cy="25.2" rx="8.6" ry="6.2" fill="#e7d4ed"/><rect x="11" y="14" width="4.4" height="6.500" fill="#dcaa9b"/><rect x="11" y="16.200" width="4.4" height="2.600" fill="#000" opacity=".28"/><rect x="8.300" y="3.800" width="9.600" height="13" rx="4.200" fill="#dcaa9b"/><rect x="12.300" y="8.500" width="1.700" height="3.600" rx=".8" fill="#fff" opacity=".16"/><circle cx="11.200" cy="9.300" r=".55" fill="#3a2b3a" opacity=".75"/><circle cx="15.100" cy="9.300" r=".55" fill="#3a2b3a" opacity=".75"/><rect x="12.300" y="12.300" width="1.800" height=".9" rx=".4" fill="#7a3b3b" opacity=".55"/><path d="M8.200 9.500C8.200 5 10.300 2.600 13.200 2.600S18 5 18 9.500c-.9-2.300-2.400-3.400-4.800-3.400S9.200 7.200 8.200 9.500z" fill="#3b3baa"/></g></svg><span id="t95" class="t " style="top:14.35px;left:49.39px;font-size:13.8px;color:#222;transform:scaleX(1.0140);transform-origin:0 50%;">Mia</span><span id="t96" class="t " style="top:13.35px;left:150.10px;font-size:12.4px;color:#333;transform:scaleX(0.9831);transform-origin:0 50%;">01/05/2025</span><i class="vd" style="left:233.50px;top:7.20px;height:31.60px;border-left-color:#e3e9ee"></i><span id="t97" class="t " style="top:13.35px;left:287.80px;font-size:12.4px;color:#333;transform:translateX(-50%) scaleX(0.9365);transform-origin:50% 50%;">09:00</span><i class="vd" style="left:340.90px;top:7.20px;height:31.60px;border-left-color:#e3e9ee"></i><span id="t98" class="t " style="top:13.35px;left:394.63px;font-size:12.4px;color:#333;transform:translateX(-50%) scaleX(0.9457);transform-origin:50% 50%;">13:00</span><i class="vd" style="left:448.30px;top:7.20px;height:31.60px;border-left-color:#e3e9ee"></i><span id="t99" class="t " style="top:13.35px;left:502.20px;font-size:12.4px;color:#333;transform:translateX(-50%);transform-origin:50% 50%;">-</span><i class="vd" style="left:555.70px;top:7.20px;height:31.60px;border-left-color:#e3e9ee"></i><svg class="abs" style="left:576.70px;top:15.00px" width="14.400" height="13" viewBox="0 0 14.400 13"><path d="M7.200 1.100L13.500 12.200H.9z" fill="none" stroke="#f2a05c" stroke-width="1" stroke-linejoin="round"/><path d="M7.200 4.800v4.100M7.200 10v1.100" stroke="#f2a05c" stroke-width="1"/></svg><span id="t100" class="t " style="top:13.35px;left:595.60px;font-size:12.4px;color:#333;transform:scaleX(0.9335);transform-origin:0 50%;">4:00h</span><i class="vd" style="left:663.10px;top:7.20px;height:31.60px;border-left-color:#e3e9ee"></i><span id="t101" class="t " style="top:13.35px;left:716.85px;font-size:12.4px;color:#333;transform:translateX(-50%) scaleX(0.9309);transform-origin:50% 50%;">5:00h</span><i class="vd" style="left:770.50px;top:7.20px;height:31.60px;border-left-color:#e3e9ee"></i><span id="t102" class="t " style="top:13.35px;left:824.05px;font-size:12.4px;color:#333;transform:translateX(-50%) scaleX(0.9263);transform-origin:50% 50%;">-1:00h</span><i class="vd" style="left:877.90px;top:7.20px;height:31.60px;border-left-color:#e3e9ee"></i><span id="t103" class="t " style="top:13.35px;left:932.38px;font-size:12.4px;color:#333;transform:translateX(-50%) scaleX(0.9252);transform-origin:50% 50%;">4:00h</span></div></div><div style="position:absolute;left:0;right:0;bottom:0;height:4px;background:#c5d1d9;"></div></div>
<div class="tip" style="position:absolute;left:482.30px;top:534.70px;width:230.90px;height:20.50px;background:#37474f;border-radius:3px;box-shadow:0 2px 6px rgba(40,60,70,.28);"><span id="t104" class="t " style="top:0.30px;left:115.13px;font-size:11.7px;color:#fff;font-weight:700;transform:translateX(-50%) scaleX(0.9058);transform-origin:50% 50%;">User has tracked 1h less than the capacity</span></div>
<svg class="abs" style="left:590.60px;top:510.20px" width="14" height="16" viewBox="0 0 14 16"><path d="M4.200 8.800V2.200c0-1.300 2-1.300 2 0v4.200c.2-.9 1.900-.8 2 .2.300-.8 1.800-.6 1.900.4.400-.7 1.700-.4 1.700.6v3.600c0 2.300-1.300 3.800-3.600 3.800H7c-1.500 0-2.400-.7-3.200-1.900L1.500 9.800c-.6-.9.600-1.900 1.400-1.100z" fill="#fff" stroke="#3a3a3a" stroke-width="1" stroke-linejoin="round"/><path d="M6.800 10.200v2.300M8.600 10.200v2.300M10.300 10.200v2.300" stroke="#3a3a3a" stroke-width=".6"/></svg>
</div>
</body>
</html>
